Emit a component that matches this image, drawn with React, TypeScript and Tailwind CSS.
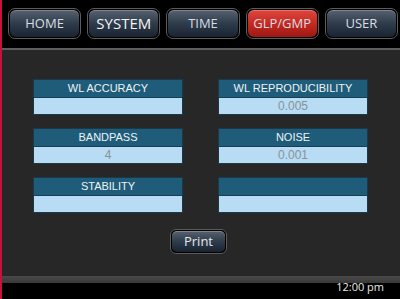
const TABS = ["HOME", "SYSTEM", "TIME", "GLP/GMP", "USER"];

const CARDS: { label: string; value: string }[] = [
  { label: "WL ACCURACY", value: "" },
  { label: "WL REPRODUCIBILITY", value: "0.005" },
  { label: "BANDPASS", value: "4" },
  { label: "NOISE", value: "0.001" },
  { label: "STABILITY", value: "" },
  { label: "", value: "" },
];

const TabButton = ({ label }: { label: string }) => {
  const active = label === "GLP/GMP";
  const big = label === "SYSTEM";
  return (
    <div className="h-[31px] rounded-[7px] border border-[#5c5c5c] bg-black p-px">
      <div
        className={`flex h-full items-center justify-center rounded-[6px] shadow-[inset_0_1px_0_rgba(255,255,255,0.25)] ${
          active
            ? "bg-gradient-to-b from-[#e0453c] via-[#c42a22] to-[#9e1812]"
            : "bg-gradient-to-b from-[#56626f] via-[#2f3c4b] to-[#1a2431]"
        }`}
      >
        <span
          className={`${big ? "text-[15px] text-[#f2f4f6]" : "text-[13px] text-[#d9dde2]"} leading-none`}
          style={{ fontFamily: '"Open Sans", "Noto Sans", sans-serif' }}
        >
          {label}
        </span>
      </div>
    </div>
  );
};

const Card = ({ label, value }: { label: string; value: string }) => (
  <div className="flex w-[150px] flex-col border border-[#1a3a4c]">
    <div className="flex h-[17px] items-center justify-center bg-[#1f5c7a] text-[11px] font-medium leading-none text-[#eef3f6]">
      {label}
    </div>
    <div className="flex h-[17px] items-center justify-center border-t border-[#163f55] bg-[#b7dcf3] text-[12px] leading-none text-[#8a9198]">
      {value}
    </div>
  </div>
);

export default function App() {
  return (
    <div
      className="flex h-[299px] w-[400px] overflow-hidden bg-black"
      style={{ fontFamily: '"Liberation Sans", Arial, sans-serif' }}
    >
      <div className="w-[2px] bg-[#c8103c]" />
      <div className="flex flex-1 flex-col">
        <div className="h-[48px] bg-black pl-[6px] pr-[2px] pt-[8px]">
          <div className="grid grid-cols-5 gap-[6px]">
            {TABS.map((t) => (
              <TabButton key={t} label={t} />
            ))}
          </div>
        </div>
        <div className="h-[2px] bg-[#5e5e5e]" />
        <div className="flex flex-1 flex-col bg-[#272727] pt-[29px]">
          <div className="grid grid-cols-[150px_150px] gap-x-[35px] gap-y-[13px] pl-[31px]">
            {CARDS.map((c, i) => (
              <Card key={i} label={c.label} value={c.value} />
            ))}
          </div>
          <div className="mt-[16px] pl-[168px]">
            <div className="h-[25px] w-[57px] rounded-[6px] border border-[#5c5c5c] bg-black p-px">
              <div
                className="flex h-full items-center justify-center rounded-[5px] bg-gradient-to-b from-[#56626f] via-[#2f3c4b] to-[#1a2431] text-[13px] leading-none text-[#e4e7ea] shadow-[inset_0_1px_0_rgba(255,255,255,0.25)]"
                style={{ fontFamily: '"Open Sans", "Noto Sans", sans-serif' }}
              >
                Print
              </div>
            </div>
          </div>
        </div>
        <div className="relative h-[23px] bg-black">
          <div className="h-[7px] bg-gradient-to-b from-[#4a4a4a] to-[#383838]" />
          <span
            className="absolute right-[16px] top-[5px] text-[11px] leading-none text-[#eaeaea]"
            style={{ fontFamily: '"Open Sans", "Noto Sans", sans-serif' }}
          >
            12:00 pm
          </span>
        </div>
      </div>
    </div>
  );
}
